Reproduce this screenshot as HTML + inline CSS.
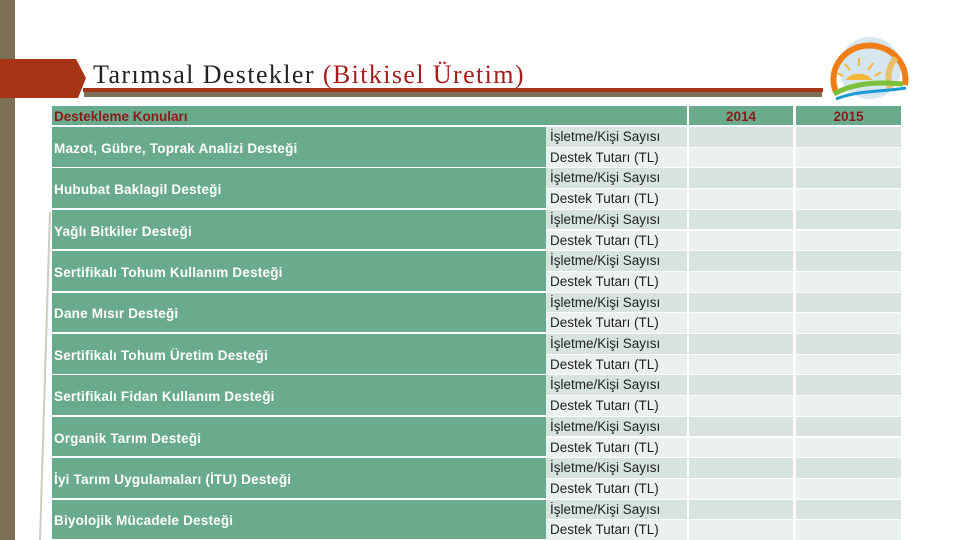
<!DOCTYPE html>
<html><head><meta charset="utf-8"><style>
*{margin:0;padding:0;box-sizing:border-box}
body{width:960px;height:540px;position:relative;overflow:hidden;background:#fff;font-family:"Liberation Sans",sans-serif}
.a{position:absolute}
.lab{position:absolute;left:52px;width:494px;background:#6aab8e;color:#fff;font-size:13.5px;font-weight:bold;padding-left:2px;padding-top:3px;display:flex;align-items:center;letter-spacing:.2px}
.sub{position:absolute;font-size:13.5px;color:#222;padding-left:4px;line-height:20px}
.r1{background:#d6e4dd}.r2{background:#ebf1ee}
.hd{font-weight:bold}
</style></head><body>
<div class="a" style="left:0;top:0;width:15px;height:540px;background:#7b6f55"></div>
<svg class="a" style="left:0;top:0" width="960" height="540">
<polygon points="0,59 76,59 86,78 78,98 0,98" fill="#a83416"/>
<line x1="50" y1="212" x2="40" y2="540" stroke="#d0ccc4" stroke-width="2"/>
<rect x="83" y="88" width="740" height="4" fill="#a83416"/>
<rect x="84" y="92" width="738" height="5" fill="#7b6f55"/>
<circle cx="870" cy="68" r="31" fill="#d6e6ef"/>
<path d="M836,92 A36,34 0 1,1 905,85" fill="none" stroke="#ef7d18" stroke-width="6"/>
<path d="M846,80 A14,10 0 0,1 872,80 Z" fill="#f3b73a"/>
<g stroke="#f3b73a" stroke-width="2"><line x1="859" y1="66" x2="859" y2="58"/><line x1="850" y1="70" x2="845" y2="64"/><line x1="868" y1="70" x2="873" y2="63"/><line x1="843" y1="76" x2="837" y2="73"/><line x1="875" y1="76" x2="881" y2="72"/></g>
<path d="M890,88 C886,76 890,64 896,58" stroke="#e8c069" stroke-width="6" fill="none"/>
<path d="M834,94 C855,82 880,82 903,84" stroke="#7bbf3a" stroke-width="5" fill="none"/>
<path d="M836,99 C858,90 882,92 906,88" stroke="#1a9ad2" stroke-width="3" fill="none"/>
</svg>
<div class="a" style="left:93px;top:60px;font-family:'Liberation Serif',serif;font-size:26px;letter-spacing:1.4px;color:#222;white-space:nowrap">Tarımsal Destekler <span style="color:#a51d1d">(Bitkisel Üretim)</span></div>
<div class="a hd" style="left:52px;top:106px;width:635px;height:19px;background:#6aab8e;color:#8b1a1a;font-size:13.5px;padding:3px 2px">Destekleme Konuları</div>
<div class="a hd" style="left:689px;top:106px;width:104px;height:19px;background:#6aab8e;color:#8b1a1a;font-size:13.5px;text-align:center;padding-top:3px">2014</div>
<div class="a hd" style="left:796px;top:106px;width:105px;height:19px;background:#6aab8e;color:#8b1a1a;font-size:13.5px;text-align:center;padding-top:3px">2015</div>
<div id="t"></div>
<script>
var L=["Mazot, Gübre, Toprak Analizi Desteği","Hububat Baklagil Desteği","Yağlı Bitkiler Desteği","Sertifikalı Tohum Kullanım Desteği","Dane Mısır Desteği","Sertifikalı Tohum Üretim Desteği","Sertifikalı Fidan Kullanım Desteği","Organik Tarım Desteği","İyi Tarım Uygulamaları (İTU) Desteği","Biyolojik Mücadele Desteği"];
var h="";
for(var i=0;i<10;i++){var y=127+i*41.4;
h+='<div class="lab" style="top:'+y+'px;height:39.5px">'+L[i]+'</div>';
var s=["İşletme/Kişi Sayısı","Destek Tutarı (TL)"];
for(var j=0;j<2;j++){var yy=y+j*20.7,c=j?"r2":"r1";
h+='<div class="sub '+c+'" style="left:546px;width:141px;top:'+yy+'px;height:19.7px">'+s[j]+'</div>';
h+='<div class="a '+c+'" style="left:689px;width:104px;top:'+yy+'px;height:19.7px"></div>';
h+='<div class="a '+c+'" style="left:796px;width:105px;top:'+yy+'px;height:19.7px"></div>';}}
document.getElementById("t").innerHTML=h;
</script>
</body></html>
